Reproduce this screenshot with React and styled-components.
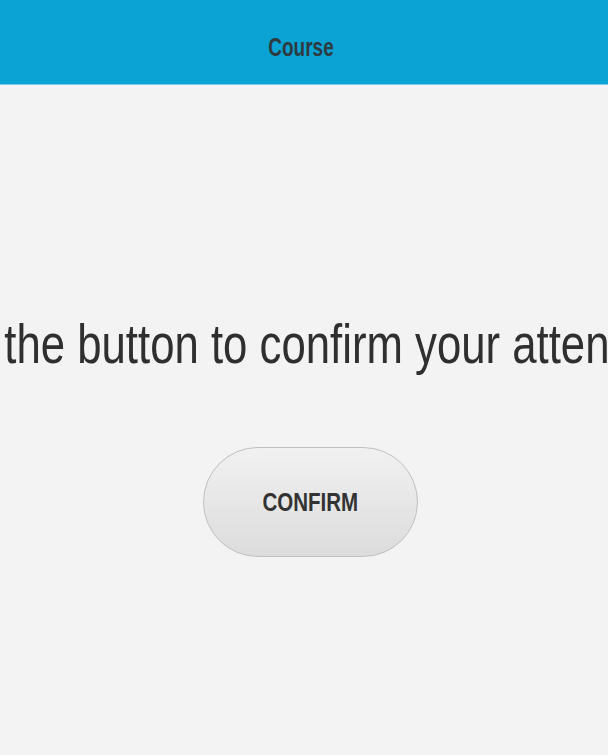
import styled, { createGlobalStyle } from 'styled-components'

const GlobalStyle = createGlobalStyle`
  html, body {
    margin: 0;
    padding: 0;
    background: #f3f3f3;
    overflow: hidden;
  }
  body {
    font-family: "Liberation Sans", Arial, sans-serif;
    color: #333;
  }
`

const Page = styled.div`
  width: 608px;
  height: 755px;
  display: flex;
  flex-direction: column;
  background: #f3f3f3;
  overflow: hidden;
`

const Header = styled.header`
  height: 84px;
  flex: none;
  display: flex;
  align-items: center;
  justify-content: center;
  background: #0aa3d4;
  border-bottom: 1px solid #7ccbe8;
`

// the reference text is drawn narrow; squeeze it horizontally
const Title = styled.h1`
  margin: 0;
  padding: 10px 8px 0 0;
  font-size: 25px;
  font-weight: bold;
  color: #2e3a3f;
  transform: scaleX(0.76);
`

const Main = styled.main`
  flex: 1;
  display: flex;
  flex-direction: column;
  align-items: center;
  padding-top: 227px;
`

const Prompt = styled.p`
  margin: 0;
  font-size: 55px;
  line-height: 64px;
  white-space: nowrap;
  flex: none;
  color: #2f2f2f;
  transform: scaleX(0.795);
`

const ConfirmButton = styled.button`
  margin: 71px 0 0 13px;
  width: 215px;
  height: 110px;
  border-radius: 55px;
  border: 1px solid #bfbfbf;
  background: linear-gradient(#f1f1f1, #dcdcdc);
  font-family: inherit;
  color: #333;
  cursor: pointer;
`

const ButtonLabel = styled.span`
  display: inline-block;
  font-size: 25px;
  font-weight: bold;
  transform: scaleX(0.82);
`

export default function App() {
  return (
    <Page>
      <GlobalStyle />
      <Header>
        <Title>Course</Title>
      </Header>
      <Main>
        <Prompt>Press the button to confirm your attendance</Prompt>
        <ConfirmButton>
          <ButtonLabel>CONFIRM</ButtonLabel>
        </ConfirmButton>
      </Main>
    </Page>
  )
}
